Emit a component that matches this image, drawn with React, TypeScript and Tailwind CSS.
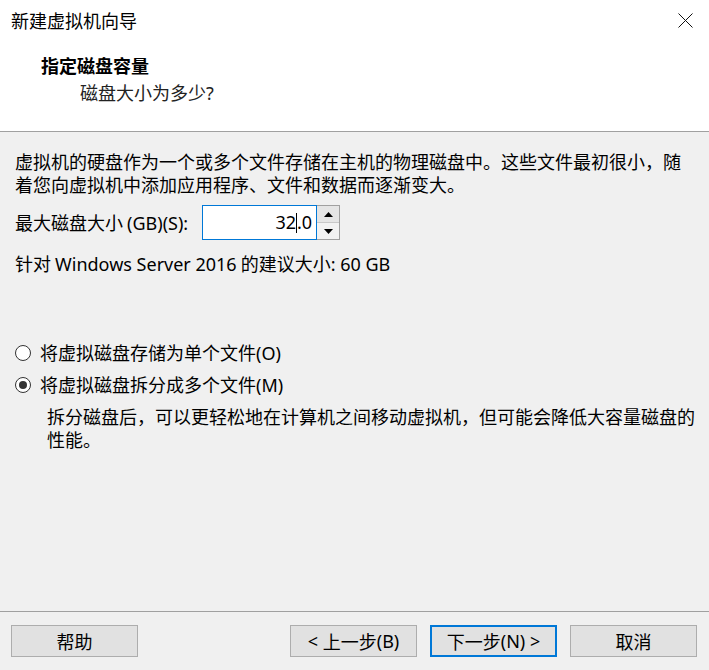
import React from 'react'

const cjk = '[font-family:"Noto_Sans_CJK_SC","Noto_Sans",sans-serif]'

function L({ children, className = '' }: { children: React.ReactNode; className?: string }) {
  return <span className={`text-[18px] [font-family:"Noto_Sans","Noto_Sans_CJK_SC",sans-serif] ${className}`}>{children}</span>
}

function Radio({ checked, children }: { checked?: boolean; children: React.ReactNode }) {
  return (
    <div className="flex items-center h-[23px] pl-[15px]">
      <span className="w-[16px] h-[16px] rounded-full border border-[#333] bg-white flex items-center justify-center">
        {checked && <span className="w-[8px] h-[8px] rounded-full bg-[#333]" />}
      </span>
      <span className="ml-[9px]">{children}</span>
    </div>
  )
}

function Button({ children, primary }: { children: React.ReactNode; primary?: boolean }) {
  return (
    <button
      className={`w-[127px] h-[32px] bg-[#e1e1e1] flex items-center justify-center text-[18px] leading-[23px] text-black ${
        primary ? 'border-2 border-[#0078d7]' : 'border border-[#adadad]'
      }`}
    >
      {children}
    </button>
  )
}

export default function App() {
  return (
    <div className={`w-[709px] h-[670px] flex flex-col bg-[#f0f0f0] text-black text-[18px] leading-[23px] ${cjk}`}>
      {/* header */}
      <div className="h-[131px] bg-white relative">
        <div className="pt-[9px] pl-[11px]">新建虚拟机向导</div>
        <div className="mt-[22px] pl-[41px] font-bold">指定磁盘容量</div>
        <div className="mt-[4px] pl-[80px] text-[#222]">
          磁盘大小为多少<L>?</L>
        </div>
        <svg className="absolute left-[678px] top-[13px]" width="15" height="15" viewBox="0 0 15 15">
          <path d="M0.5 0.5 L14.5 14.5 M14.5 0.5 L0.5 14.5" stroke="#111" strokeWidth="1" fill="none" />
        </svg>
      </div>
      <div className="h-px bg-[#a0a0a0]" />

      {/* body */}
      <div className="flex-1 pt-[18px]">
        <div className="px-[15px] whitespace-nowrap">
          虚拟机的硬盘作为一个或多个文件存储在主机的物理磁盘中。这些文件最初很小，随
          <br />
          着您向虚拟机中添加应用程序、文件和数据而逐渐变大。
        </div>

        <div className="mt-[9px] pl-[15px] flex items-center">
          <span>
            最大磁盘大小 <L>(GB)(S):</L>
          </span>
          <div className="ml-[14px] flex h-[35px]">
            <div className="w-[115px] h-full bg-white border border-[#0078d7] flex items-center justify-end pr-[4px]">
              <L className="flex items-center">
                32<span className="inline-block w-px h-[20px] bg-black" />.0
              </L>
            </div>
            <div className="w-[23px] h-full border border-[#a0a0a0] border-l-0 flex flex-col">
              <div className="flex-1 bg-[#e5e5e5] flex items-center justify-center border-b border-[#c8c8c8]">
                <svg width="9" height="5" viewBox="0 0 9 5">
                  <path d="M0 5 L4.5 0 L9 5 Z" fill="#000" />
                </svg>
              </div>
              <div className="flex-1 bg-[#f2f2f2] flex items-center justify-center">
                <svg width="9" height="5" viewBox="0 0 9 5">
                  <path d="M0 0 L4.5 5 L9 0 Z" fill="#000" />
                </svg>
              </div>
            </div>
          </div>
        </div>

        <div className="mt-[12px] pl-[15px]">
          针对 <L>Windows Server 2016</L> 的建议大小<L>: 60 GB</L>
        </div>

        <div className="mt-[65px]">
          <Radio>
            将虚拟磁盘存储为单个文件<L>(O)</L>
          </Radio>
        </div>
        <div className="mt-[9px]">
          <Radio checked>
            将虚拟磁盘拆分成多个文件<L>(M)</L>
          </Radio>
        </div>
        <div className="mt-[9px] pl-[47px] whitespace-nowrap">
          拆分磁盘后，可以更轻松地在计算机之间移动虚拟机，但可能会降低大容量磁盘的
          <br />
          性能。
        </div>
      </div>

      {/* footer */}
      <div className="h-px bg-[#a0a0a0]" />
      <div className="h-[58px] pt-[13px] flex justify-between pl-[11px] pr-[12px]">
        <Button>帮助</Button>
        <div className="flex gap-[13px]">
          <Button>
            <L>&lt;&nbsp;</L>上一步<L>(B)</L>
          </Button>
          <Button primary>
            下一步<L>(N) &gt;</L>
          </Button>
          <Button>取消</Button>
        </div>
      </div>
    </div>
  )
}
